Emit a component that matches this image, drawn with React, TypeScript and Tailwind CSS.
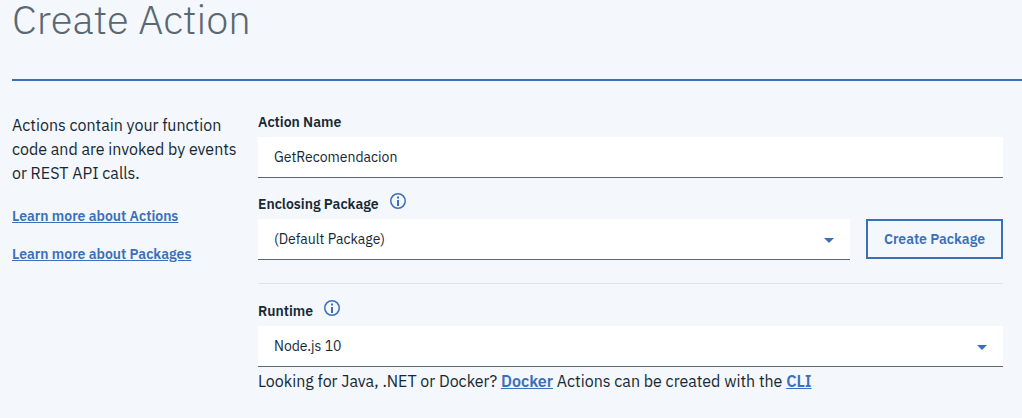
import { useState } from "react";
import type { ReactNode } from "react";

const linkClass = "font-semibold text-[#3a6fb9] underline";

function InfoButton({ label }: { label: string }) {
  return (
    <button type="button" aria-label={label} className="block size-4 text-[#3a6fb9]">
      <svg viewBox="0 0 16 16" className="size-4" fill="currentColor" aria-hidden="true">
        <path d="M8 14.5a6.5 6.5 0 1 0 0-13 6.5 6.5 0 0 0 0 13zM8 16A8 8 0 1 1 8 0a8 8 0 0 1 0 16z" />
        <path d="M7 7h2v6H7zM7 3.5h2v2H7z" />
      </svg>
    </button>
  );
}

function Dropdown({ id, options }: { id: string; options: string[] }) {
  return (
    <div className="relative min-w-0 flex-1">
      <select
        id={id}
        className="block h-[41px] w-full appearance-none rounded-none border-b border-[#5a6872] bg-white px-4 text-sm text-[#152935]"
      >
        {options.map((option) => (
          <option key={option}>{option}</option>
        ))}
      </select>
      <svg
        viewBox="0 0 10 5"
        className="pointer-events-none absolute top-[19px] right-4 h-[5px] w-[10px] fill-[#3a6fb9]"
        aria-hidden="true"
      >
        <path d="M0 0h10L5 5z" />
      </svg>
    </div>
  );
}

function FieldLabel({ htmlFor, children }: { htmlFor: string; children: ReactNode }) {
  return (
    <label htmlFor={htmlFor} className="text-sm leading-5 font-semibold">
      {children}
    </label>
  );
}

function LabelRow({ htmlFor, info, children }: { htmlFor: string; info: string; children: ReactNode }) {
  return (
    <div className="flex h-[26px] items-start gap-[11px]">
      <div className="flex pt-px">
        <FieldLabel htmlFor={htmlFor}>{children}</FieldLabel>
      </div>
      <InfoButton label={info} />
    </div>
  );
}

export default function App() {
  const [name, setName] = useState("GetRecomendacion");

  return (
    <div className="min-h-screen bg-[#f4f7fb] pl-3 font-['IBM_Plex_Sans','Roboto',sans-serif] text-[#152935]">
      <header className="border-b-2 border-[#3a6fb9] pb-[41px]">
        <h1 className="text-[40px] leading-[38px] font-light text-[#5a6872]">Create Action</h1>
      </header>

      <div className="flex pt-[31px] pr-[19px]">
        <aside className="w-[246px] shrink-0 pt-px pr-4">
          <p className="text-base leading-6">
            Actions contain your function code and are invoked by events or REST API calls.
          </p>
          <nav className="mt-[21px] flex flex-col items-start gap-[18px] text-sm leading-5">
            <a href="#actions" className={linkClass}>
              Learn more about Actions
            </a>
            <a href="#packages" className={linkClass}>
              Learn more about Packages
            </a>
          </nav>
        </aside>

        <form className="min-w-0 flex-1" onSubmit={(event) => event.preventDefault()}>
          <div className="flex h-[25px] items-start">
            <FieldLabel htmlFor="action-name">Action Name</FieldLabel>
          </div>
          <input
            id="action-name"
            type="text"
            value={name}
            onChange={(event) => setName(event.target.value)}
            className="block h-[41px] w-full rounded-none border-b border-[#5a6872] bg-white px-4 text-sm"
          />

          <div className="pt-[15px]">
            <LabelRow htmlFor="package" info="About packages">
              Enclosing Package
            </LabelRow>
          </div>
          <div className="flex items-start gap-4">
            <Dropdown id="package" options={["(Default Package)"]} />
            <button
              type="button"
              className="h-10 w-[137px] border-2 border-[#3a6fb9] text-sm font-semibold whitespace-nowrap text-[#3a6fb9]"
            >
              Create Package
            </button>
          </div>

          <hr className="mt-[23px] border-[#dfe3e6]" />

          <div className="pt-4">
            <LabelRow htmlFor="runtime" info="About runtimes">
              Runtime
            </LabelRow>
          </div>
          <Dropdown id="runtime" options={["Node.js 10"]} />
          <p className="mt-[2px] text-base leading-6">
            Looking for Java, .NET or Docker?{" "}
            <a href="#docker" className={linkClass}>
              Docker
            </a>{" "}
            Actions can be created with the{" "}
            <a href="#cli" className={linkClass}>
              CLI
            </a>
          </p>
        </form>
      </div>
    </div>
  );
}
